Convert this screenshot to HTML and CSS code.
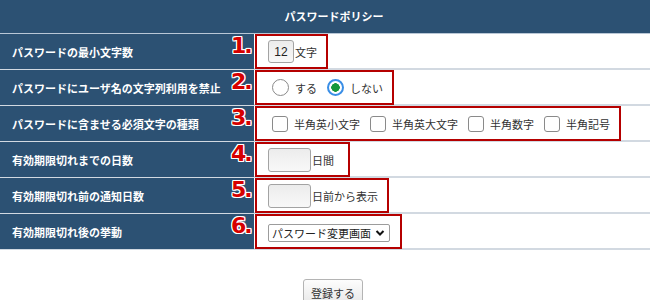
FILE: index.html
```html
<!DOCTYPE html>
<html lang="ja">
<head>
    <meta charset="UTF-8">
    <title>パスワードポリシー</title>
    <link rel="stylesheet" href="styles.css">
</head>
<body>
    <div class="policy">
        <div class="policy-head">パスワードポリシー</div>

        <div class="row">
            <div class="label">パスワードの最小文字数</div>
            <div class="value">
                <span class="num">1.</span>
                <div class="mark">
                    <input class="text-input short" type="text" value="12">文字
                </div>
            </div>
        </div>

        <div class="row">
            <div class="label">パスワードにユーザ名の文字列利用を禁止</div>
            <div class="value">
                <span class="num">2.</span>
                <div class="mark">
                    <label class="opt"><input type="radio" name="deny">する</label>
                    <label class="opt"><input type="radio" name="deny" checked>しない</label>
                </div>
            </div>
        </div>

        <div class="row">
            <div class="label">パスワードに含ませる必須文字の種類</div>
            <div class="value">
                <span class="num">3.</span>
                <div class="mark mark-wide">
                    <label class="opt"><input type="checkbox">半角英小文字</label>
                    <label class="opt"><input type="checkbox">半角英大文字</label>
                    <label class="opt"><input type="checkbox">半角数字</label>
                    <label class="opt"><input type="checkbox">半角記号</label>
                </div>
            </div>
        </div>

        <div class="row">
            <div class="label">有効期限切れまでの日数</div>
            <div class="value">
                <span class="num">4.</span>
                <div class="mark mark-days">
                    <input class="text-input days" type="text">日間
                </div>
            </div>
        </div>

        <div class="row">
            <div class="label">有効期限切れ前の通知日数</div>
            <div class="value">
                <span class="num">5.</span>
                <div class="mark">
                    <input class="text-input days" type="text">日前から表示
                </div>
            </div>
        </div>

        <div class="row">
            <div class="label">有効期限切れ後の挙動</div>
            <div class="value">
                <span class="num">6.</span>
                <div class="mark mark-select">
                    <select class="after">
                        <option>パスワード変更画面</option>
                        <option>ログイン不可</option>
                    </select>
                </div>
            </div>
        </div>

        <div class="actions">
            <button class="submit" type="button">登録する</button>
        </div>
    </div>
</body>
</html>
```

FILE: styles.css
```css
body {
    margin: 0;
    font-family: "Noto Sans CJK JP", "Liberation Sans", sans-serif;
    font-size: 11px;
    color: #333;
    background: #fff;
}
.policy {
    width: 650px;
}
.policy-head {
    height: 33px;
    line-height: 33px;
    padding-left: 18px;
    text-align: center;
    font-weight: bold;
    color: #fff;
    background-color: #2c5173;
    border-bottom: 1px solid #b9c7d6;
}
.row {
    display: grid;
    grid-template-columns: 255px 1fr;
    height: 34px;
    border-bottom: 2px solid #d2d9e1;
}
.label {
    display: flex;
    align-items: center;
    padding-left: 12px;
    background-color: #2c5173;
    color: #fff;
    font-weight: bold;
    margin-right: 1px;
}
.value {
    position: relative;
    display: flex;
}
.mark {
    display: flex;
    align-items: center;
    box-sizing: border-box;
    height: 35px;
    padding: 0 9px 0 11px;
    border: 2px solid #b50000;
    white-space: nowrap;
}
.mark-wide {
    padding-right: 9px;
}
.mark-days {
    padding-right: 14px;
}
.mark-select {
    padding-right: 10px;
    padding-top: 2px;
}
.num {
    position: absolute;
    left: -24px;
    top: 1px;
    font-family: "DejaVu Sans", sans-serif;
    font-weight: bold;
    font-size: 22px;
    line-height: 1;
    letter-spacing: -2px;
    color: #d60000;
    text-shadow: 1px 0 0 #fff, -1px 0 0 #fff, 0 1px 0 #fff, 0 -1px 0 #fff,
        1px 1px 0 #fff, -1px -1px 0 #fff, 1px -1px 0 #fff, -1px 1px 0 #fff;
    z-index: 2;
}
.text-input {
    box-sizing: border-box;
    margin: 0 1px 0 0;
    padding: 0;
    border: 1px solid #a3a3a3;
    border-radius: 3px;
    background: linear-gradient(#ececec, #f8f8f8);
    font-family: "Liberation Sans", sans-serif;
    font-size: 12px;
    color: #222;
    text-align: center;
}
.text-input.short {
    width: 26px;
    height: 23px;
}
.text-input.days {
    width: 43px;
    height: 24px;
}
.opt {
    display: flex;
    align-items: center;
    margin-right: 6px;
}
.opt:last-child {
    margin-right: 0;
}
.opt input {
    appearance: none;
    -webkit-appearance: none;
    box-sizing: border-box;
    width: 16px;
    height: 16px;
    margin: 0 6px 0 4px;
    border: 1px solid #8a8a8a;
    background: #fff;
}
.opt input[type="checkbox"] {
    border-radius: 3px;
}
.opt input[type="radio"] {
    border-radius: 50%;
    width: 17px;
    height: 17px;
}
.opt input[type="radio"]:checked {
    border: 2px solid #3a8ee6;
    background: radial-gradient(circle, #14973a 0 4px, #fff 4.5px);
}
.after {
    appearance: none;
    -webkit-appearance: none;
    width: 122px;
    height: 18px;
    margin: 0;
    padding: 0 0 0 3px;
    border: 1px solid #9c9c9c;
    border-radius: 2px;
    font-family: "Noto Sans CJK JP", sans-serif;
    font-size: 11px;
    line-height: 16px;
    color: #222;
    background: #fff url("data:image/svg+xml,%3Csvg xmlns='http://www.w3.org/2000/svg' width='10' height='8' viewBox='0 0 10 8'%3E%3Cpath d='M1.5 2 L5 5.5 L8.5 2' fill='none' stroke='%23111' stroke-width='2'/%3E%3C/svg%3E") no-repeat right 4px center;
}
.actions {
    padding: 29px 0 0 303px;
}
.submit {
    box-sizing: border-box;
    width: 60px;
    height: 28px;
    padding: 0;
    border: 1px solid #b4b4b4;
    border-radius: 3px;
    background: linear-gradient(#fdfdfd, #e6e6e6);
    font-family: "Noto Sans CJK JP", sans-serif;
    font-size: 11px;
    color: #333;
}
```
